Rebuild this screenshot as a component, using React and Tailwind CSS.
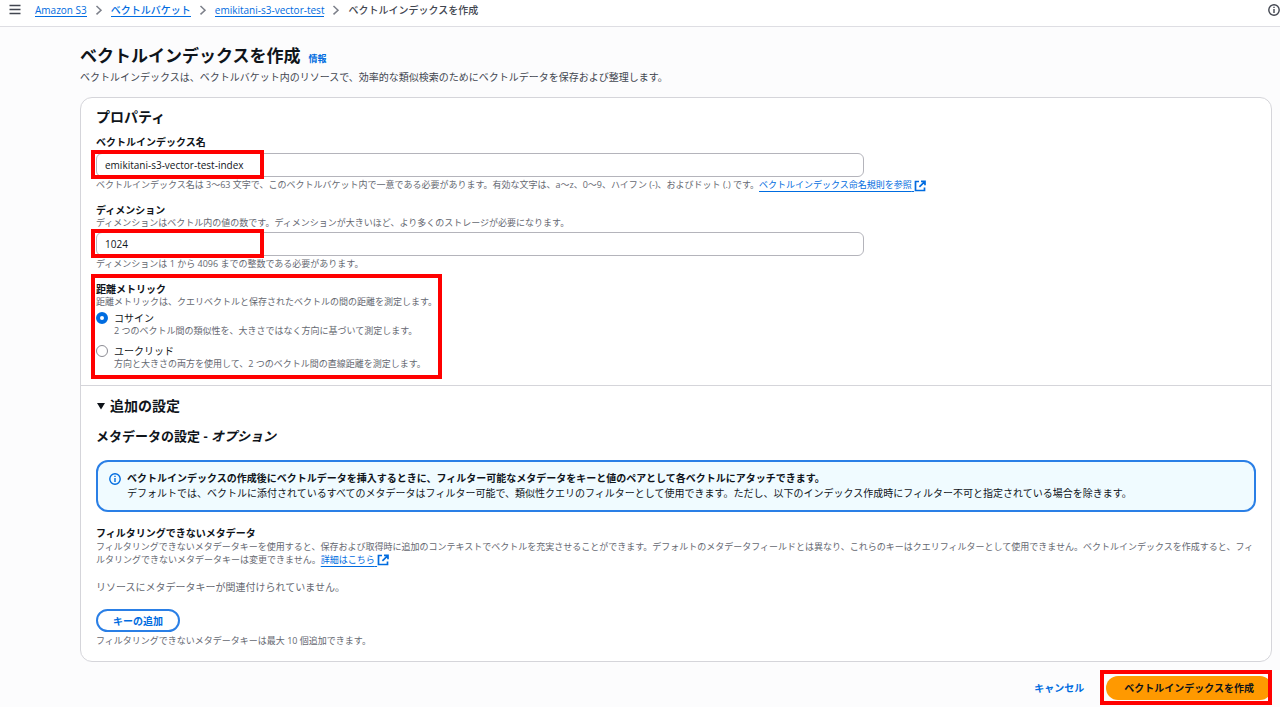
import { useState } from "react";

const breadcrumbs = ["Amazon S3", "ベクトルバケット", "emikitani-s3-vector-test"];

const metrics = [
  {
    id: "cosine",
    label: "コサイン",
    description: "2 つのベクトル間の類似性を、大きさではなく方向に基づいて測定します。",
  },
  {
    id: "euclidean",
    label: "ユークリッド",
    description: "方向と大きさの両方を使用して、2 つのベクトル間の直線距離を測定します。",
  },
];

function MenuIcon() {
  return (
    <svg viewBox="0 0 12 12" className="w-3 h-3" fill="none" stroke="currentColor" strokeWidth="1.5">
      <path d="M0.5 1.5h11M0.5 5.5h11M0.5 9.5h11" />
    </svg>
  );
}

function ChevronIcon() {
  return (
    <svg viewBox="0 0 8 12" className="w-2 h-3 text-[#7d808a]" fill="none" stroke="currentColor" strokeWidth="1.5">
      <path d="M1.5 2l4.5 4.2L1.5 10.4" />
    </svg>
  );
}

function InfoIcon() {
  return (
    <svg viewBox="0 0 12 12" className="w-3 h-3 shrink-0" fill="none" stroke="currentColor" strokeWidth="1.4">
      <circle cx="6" cy="6" r="5.2" />
      <path d="M6 5v4M6 2.8v1.3" />
    </svg>
  );
}

function ExternalIcon() {
  return (
    <svg
      viewBox="0 0 12 12"
      className="inline-block w-3 h-3 align-middle"
      fill="none"
      stroke="currentColor"
      strokeWidth="1.7"
    >
      <path d="M5 1.5H1.5v9h9V7.5M7 1.3h4v4M11 1.3L5.4 6.8" />
    </svg>
  );
}

function ExternalLink({ children }) {
  return (
    <a href="#" className="text-[#006ce0] underline underline-offset-3">
      {children}&nbsp;
      <ExternalIcon />
    </a>
  );
}

export default function App() {
  const [name, setName] = useState("emikitani-s3-vector-test-index");
  const [dimension, setDimension] = useState("1024");
  const [metric, setMetric] = useState("cosine");
  const [open, setOpen] = useState(true);

  return (
    <div className="min-h-screen bg-[#fcfcfd] font-['Open_Sans','Noto_Sans_CJK_JP',sans-serif] text-[10px] leading-[14px] text-[#0f141a]">
      <header className="flex items-center h-[27px] pb-1.5 pl-[9px] border-b border-[#dedee3] bg-white text-[#424650]">
        <button aria-label="メニュー" className="mr-3.5">
          <MenuIcon />
        </button>
        <nav className="flex items-center gap-2 font-medium">
          {breadcrumbs.map((item) => (
            <div key={item} className="flex items-center gap-2">
              <a href="#" className="border-b border-[#006ce0] text-[#006ce0] leading-3">
                {item}
              </a>
              <ChevronIcon />
            </div>
          ))}
          <span>ベクトルインデックスを作成</span>
        </nav>
        <button aria-label="情報" className="ml-auto">
          <InfoIcon />
        </button>
      </header>

      <main className="pt-[17px] pl-20 pr-2 pb-1">
        <div className="flex items-baseline gap-2">
          <h1 className="text-[17px] leading-6 font-bold">ベクトルインデックスを作成</h1>
          <a href="#" className="text-[9px] leading-3 font-bold text-[#006ce0]">
            情報
          </a>
        </div>
        <p className="mt-0.5 text-[#424650]">
          ベクトルインデックスは、ベクトルバケット内のリソースで、効率的な類似検索のためにベクトルデータを保存および整理します。
        </p>

        <div className="mt-[13px] rounded-xl border border-[#d5d5da] bg-white">
          {/* Properties */}
          <section className="px-[15px] pt-[9px] pb-[15px]">
            <h2 className="text-[14px] leading-5 font-bold">プロパティ</h2>

            <label htmlFor="index-name" className="block mt-2 font-bold">
              ベクトルインデックス名
            </label>
            <div className="relative mt-1 max-w-[768px]">
              <input
                id="index-name"
                value={name}
                onChange={(e) => setName(e.target.value)}
                className="block w-full h-6 px-2 rounded-md border border-[#b4b4bb] bg-white font-medium"
              />
              <div className="absolute -left-[5px] -top-[3px] w-[173px] h-[29px] border-4 border-[#ff0000] pointer-events-none" />
            </div>
            <p className="mt-0.5 text-[9px] leading-3 text-[#656871]">
              ベクトルインデックス名は 3～63 文字で、このベクトルバケット内で一意である必要があります。有効な文字は、a～z、0～9、ハイフン (-)、およびドット (.) です。
              <ExternalLink>ベクトルインデックス命名規則を参照</ExternalLink>
            </p>

            <label htmlFor="dimension" className="block mt-[11px] font-bold">
              ディメンション
            </label>
            <p className="text-[9px] leading-3 text-[#656871]">
              ディメンションはベクトル内の値の数です。ディメンションが大きいほど、より多くのストレージが必要になります。
            </p>
            <div className="relative mt-[3px] max-w-[768px]">
              <input
                id="dimension"
                value={dimension}
                onChange={(e) => setDimension(e.target.value)}
                className="block w-full h-6 px-2 rounded-md border border-[#b4b4bb] bg-white font-medium"
              />
              <div className="absolute -left-[5px] -top-[3px] w-[173px] h-[29px] border-4 border-[#ff0000] pointer-events-none" />
            </div>
            <p className="mt-0.5 text-[9px] leading-3 text-[#656871]">
              ディメンションは 1 から 4096 までの整数である必要があります。
            </p>

            <div className="relative mt-3">
              <fieldset>
                <legend className="font-bold">距離メトリック</legend>
                <p className="text-[9px] leading-3 text-[#656871]">
                  距離メトリックは、クエリベクトルと保存されたベクトルの間の距離を測定します。
                </p>
                <div className="flex flex-col gap-[7px] mt-[3px]">
                  {metrics.map((m) => (
                    <div key={m.id} className="flex gap-1.5">
                      <input
                        type="radio"
                        id={m.id}
                        name="metric"
                        checked={metric === m.id}
                        onChange={() => setMetric(m.id)}
                        className="appearance-none w-3 h-3 mt-px shrink-0 rounded-full border border-[#8c8c94] bg-white checked:border-4 checked:border-[#006ce0]"
                      />
                      <label htmlFor={m.id}>
                        <span className="block">{m.label}</span>
                        <span className="block text-[9px] leading-3 text-[#656871]">{m.description}</span>
                      </label>
                    </div>
                  ))}
                </div>
              </fieldset>
              <div className="absolute -left-[5px] -top-2 w-[351px] h-[105px] border-4 border-[#ff0000] pointer-events-none" />
            </div>
          </section>

          {/* Additional settings */}
          <section className="px-[15px] pt-2.5 pb-3.5 border-t border-[#d5d5da]">
            <h2 className="text-[14px] leading-5 font-bold">
              <button onClick={() => setOpen(!open)} aria-expanded={open} className="flex items-center gap-[5px]">
                <svg viewBox="0 0 8 8" className="w-2 h-2 ml-px" fill="currentColor">
                  <path d="M0 1h8L4 7.5z" />
                </svg>
                追加の設定
              </button>
            </h2>

            {open && (
              <div>
                <h3 className="mt-2.5 text-[13px] leading-5 font-bold">
                  メタデータの設定 - <em>オプション</em>
                </h3>

                <div className="flex gap-1.5 mt-3.5 px-[11px] py-[9px] rounded-xl border-2 border-[#2a7fe6] bg-[#f0fbff]">
                  <span className="pt-0.5 text-[#006ce0]">
                    <InfoIcon />
                  </span>
                  <div className="leading-[15px]">
                    <p className="font-bold">
                      ベクトルインデックスの作成後にベクトルデータを挿入するときに、フィルター可能なメタデータをキーと値のペアとして各ベクトルにアタッチできます。
                    </p>
                    <p>
                      デフォルトでは、ベクトルに添付されているすべてのメタデータはフィルター可能で、類似性クエリのフィルターとして使用できます。ただし、以下のインデックス作成時にフィルター不可と指定されている場合を除きます。
                    </p>
                  </div>
                </div>

                <h4 className="mt-3.5 font-bold">フィルタリングできないメタデータ</h4>
                <p className="text-[9px] leading-[13px] text-[#656871]">
                  フィルタリングできないメタデータキーを使用すると、保存および取得時に追加のコンテキストでベクトルを充実させることができます。デフォルトのメタデータフィールドとは異なり、これらのキーはクエリフィルターとして使用できません。ベクトルインデックスを作成すると、フィルタリングできないメタデータキーは変更できません。
                  <ExternalLink>詳細はこちら</ExternalLink>
                </p>
                <p className="mt-3.5 text-[#656871]">リソースにメタデータキーが関連付けられていません。</p>
                <button className="flex items-center h-[23px] mt-[15px] px-[15px] rounded-full border-2 border-[#2a7fe6] bg-white font-bold text-[#006ce0]">
                  キーの追加
                </button>
                <p className="mt-[3px] text-[9px] leading-3 text-[#656871]">
                  フィルタリングできないメタデータキーは最大 10 個追加できます。
                </p>
              </div>
            )}
          </section>
        </div>

        <div className="flex justify-end items-center gap-[22px] mt-3.5">
          <button className="font-bold text-[#006ce0]">キャンセル</button>
          <div className="relative">
            <button className="block h-6 px-[18px] rounded-full bg-[#ff9900] font-bold">
              ベクトルインデックスを作成
            </button>
            <div className="absolute -left-[6px] right-0 -top-[6px] h-[35px] border-4 border-[#ff0000] pointer-events-none" />
          </div>
        </div>
      </main>
    </div>
  );
}
